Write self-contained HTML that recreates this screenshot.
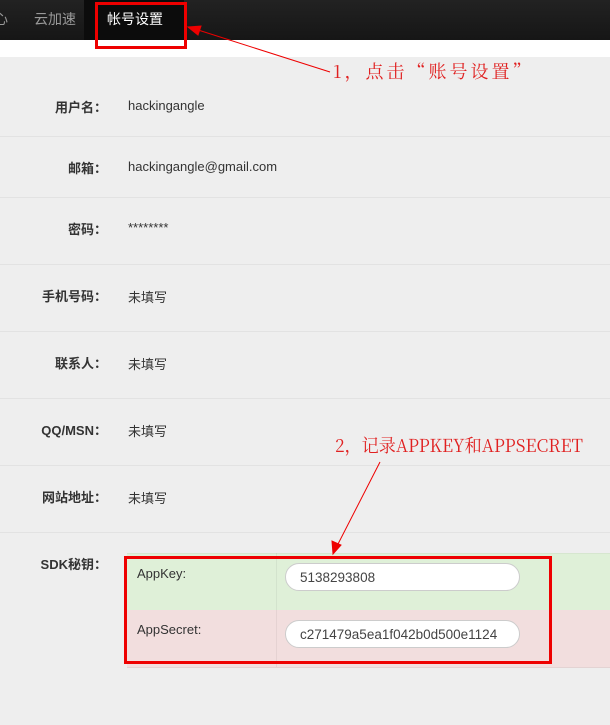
<!DOCTYPE html>
<html><head><meta charset="utf-8"><style>
body{margin:0;width:610px;height:725px;overflow:hidden;background:#eee;font-family:"Liberation Sans","Noto Sans CJK SC",sans-serif;position:relative}
.nav{position:absolute;left:0;top:0;width:610px;height:40px;background:linear-gradient(#222,#161616)}
.nav span{position:absolute;top:9px;font-size:14px;color:#999}
.act{position:absolute;left:84px;top:0;width:100px;height:40px;background:#0c0c0c}
.white{position:absolute;left:0;top:40px;width:610px;height:17px;background:#fff}
.row{position:absolute;left:0;width:610px;border-bottom:1px solid #e2e2e2}
.lab{position:absolute;right:503px;font-size:13px;font-weight:bold;color:#333;white-space:nowrap}
.val{position:absolute;left:128px;font-size:13px;color:#333;white-space:nowrap}
.ann{position:absolute;color:#e02020;font-family:"Noto Serif CJK SC","Liberation Serif",serif;font-size:18px;white-space:nowrap;transform-origin:0 0}
.inp{position:absolute;left:285px;width:235px;height:28px;border:1px solid #ccc;border-radius:14px;background:#fff;font-size:13.5px;color:#444;line-height:28px;padding-left:14px;box-sizing:border-box;overflow:hidden;white-space:nowrap}
</style></head><body>
<div class="nav"><span style="left:-6px">心</span><span style="left:34px">云加速</span><div class="act"></div><span style="left:107px;color:#fff">帐号设置</span></div>
<div class="white"></div>
<div class="row" style="top:57px;height:79px"></div>
<div class="row" style="top:137px;height:60px"></div>
<div class="row" style="top:198px;height:66px"></div>
<div class="row" style="top:265px;height:66px"></div>
<div class="row" style="top:332px;height:66px"></div>
<div class="row" style="top:399px;height:66px"></div>
<div class="row" style="top:466px;height:66px"></div>
<div class="lab" style="top:97px">用户名：</div><div class="val" style="top:98px">hackingangle</div>
<div class="lab" style="top:158px">邮箱：</div><div class="val" style="top:159px">hackingangle@gmail.com</div>
<div class="lab" style="top:219px">密码：</div><div class="val" style="top:220px">********</div>
<div class="lab" style="top:286px">手机号码：</div><div class="val" style="top:287px">未填写</div>
<div class="lab" style="top:353px">联系人：</div><div class="val" style="top:354px">未填写</div>
<div class="lab" style="top:420px">QQ/MSN：</div><div class="val" style="top:421px">未填写</div>
<div class="lab" style="top:487px">网站地址：</div><div class="val" style="top:488px">未填写</div>
<div class="lab" style="top:554px">SDK秘钥：</div>
<div style="position:absolute;left:127px;top:553px;width:483px;height:57px;background:#dff0d8;border-top:1px solid #d6e6cf"></div>
<div style="position:absolute;left:127px;top:610px;width:483px;height:57px;background:#f2dede;border-bottom:1px solid #e3d3d3"></div>
<div style="position:absolute;left:276px;top:553px;width:1px;height:114px;background:rgba(0,0,0,0.05)"></div>
<div class="val" style="left:137px;top:566px">AppKey:</div>
<div class="val" style="left:137px;top:622px">AppSecret:</div>
<div class="inp" style="top:563px">5138293808</div>
<div class="inp" style="top:620px">c271479a5ea1f042b0d500e1124</div>
<div style="position:absolute;left:95px;top:2px;width:86px;height:41px;border:3px solid #e00"></div>
<div style="position:absolute;left:124px;top:556px;width:422px;height:102px;border:3px solid #e00"></div>
<div class="ann" style="left:333px;top:58px;letter-spacing:3px">1，点击“账号设置”</div>
<div class="ann" style="left:335px;top:432px;transform:scaleX(0.95)">2，记录APPKEY和APPSECRET</div>
<svg style="position:absolute;left:0;top:0" width="610" height="725"><g stroke="#e00" fill="#e00" stroke-width="1">
<line x1="330" y1="72" x2="195" y2="29"/><polygon points="188,27 201,26 198,35"/>
<line x1="380" y1="462" x2="337" y2="546"/><polygon points="333,554 332,541 341,545"/></g></svg>
</body></html>
